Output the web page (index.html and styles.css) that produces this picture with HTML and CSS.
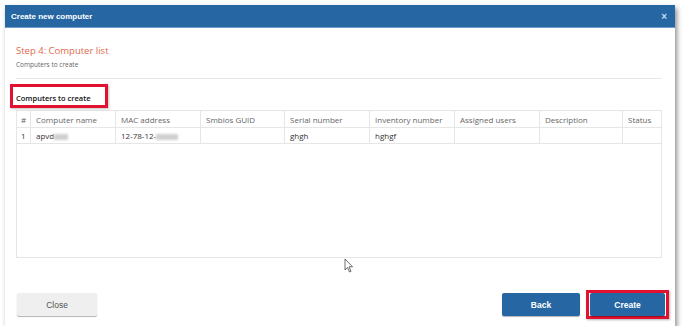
FILE: index.html
```html
<!DOCTYPE html>
<html lang="en">
<head>
    <meta charset="UTF-8">
    <title>Create new computer</title>
    <link rel="stylesheet" href="styles.css">
</head>
<body>
    <div class="dialog">
        <div class="dialog-header">
            <span class="dialog-title">Create new computer</span>
            <span class="close-x">&times;</span>
        </div>
        <div class="dialog-body">
            <div class="step-title">Step 4: Computer list</div>
            <div class="step-sub">Computers to create</div>
            <div class="divider"></div>
            <div class="section-label">Computers to create</div>
            <div class="table-wrap">
                <table class="grid">
                    <colgroup>
                        <col style="width:14px">
                        <col style="width:85px">
                        <col style="width:85px">
                        <col style="width:84px">
                        <col style="width:85px">
                        <col style="width:85px">
                        <col style="width:85px">
                        <col style="width:83px">
                        <col style="width:39px">
                    </colgroup>
                    <thead>
                        <tr>
                            <th>#</th>
                            <th>Computer name</th>
                            <th>MAC address</th>
                            <th>Smbios GUID</th>
                            <th>Serial number</th>
                            <th>Inventory number</th>
                            <th>Assigned users</th>
                            <th>Description</th>
                            <th>Status</th>
                        </tr>
                    </thead>
                    <tbody>
                        <tr>
                            <td>1</td>
                            <td>apvd<span class="blur w18"></span></td>
                            <td>12-78-12-<span class="blur w22"></span></td>
                            <td></td>
                            <td>ghgh</td>
                            <td>hghgf</td>
                            <td></td>
                            <td></td>
                            <td></td>
                        </tr>
                    </tbody>
                </table>
            </div>
        </div>
        <div class="dialog-footer">
            <button class="btn btn-light">Close</button>
            <div class="footer-right">
                <button class="btn btn-primary">Back</button>
                <div class="highlight">
                    <button class="btn btn-primary">Create</button>
                </div>
            </div>
        </div>
        <svg class="cursor" width="10" height="15" viewBox="0 0 10 15">
            <path d="M1 1 L1 12 L3.5 9.5 L5.5 14 L7 13.3 L5 8.8 L8.5 8.8 Z" fill="#fff" stroke="#444" stroke-width="0.8" stroke-linejoin="round"/>
        </svg>
    </div>
</body>
</html>
```

FILE: styles.css
```css
* {
    margin: 0;
    padding: 0;
    box-sizing: border-box;
}

body {
    background: #ffffff;
    font-family: 'Open Sans', 'Noto Sans', sans-serif;
    padding: 5px 0 0 5px;
}

.dialog {
    position: relative;
    width: 670px;
    height: 321px;
    background: #fff;
    display: flex;
    flex-direction: column;
    box-shadow: 2px 3px 5px rgba(0, 0, 0, 0.45);
}

.dialog-header {
    height: 23px;
    background: #2566a3;
    color: #fff;
    display: flex;
    align-items: center;
    justify-content: space-between;
    padding: 0 8px 0 6px;
    border-bottom: 1px solid #6f9acb;
}

.dialog-title {
    font-family: 'Liberation Sans', Arial, sans-serif;
    font-size: 8px;
    font-weight: bold;
}

.close-x {
    font-family: 'Liberation Sans', Arial, sans-serif;
    font-size: 10px;
    font-weight: bold;
    color: #c9dcf0;
}

.dialog-body {
    padding: 16px 13px 0 11px;
    flex: 1;
}

.step-title {
    color: #e2694c;
    font-size: 9.5px;
    line-height: 14px;
}

.step-sub {
    color: #666;
    font-size: 6.5px;
    line-height: 10px;
    margin-top: 2px;
}

.divider {
    height: 1px;
    background: #e8e8e8;
    margin-top: 8px;
}

.section-label {
    display: inline-block;
    margin: 5px 0 0 -6px;
    width: 98px;
    height: 24px;
    border: 3px solid #e1122f;
    padding: 1px 0 0 3px;
    font-size: 7.5px;
    font-weight: 600;
    color: #111;
    line-height: 20px;
    box-shadow: 1px 1px 2px rgba(0, 0, 0, 0.25);
}

.table-wrap {
    margin-top: 2px;
    height: 148px;
    border: 1px solid #e6e6e6;
}

.grid {
    width: 645px;
    border-collapse: collapse;
    table-layout: fixed;
    margin: -1px;
}

.grid th,
.grid td {
    border: 1px solid #e6e6e6;
    text-align: left;
    padding: 0 5px;
    font-size: 8px;
    white-space: nowrap;
    overflow: hidden;
}

.grid th {
    height: 17px;
    font-weight: normal;
    color: #666;
}

.grid td {
    height: 16px;
    color: #333;
}

.grid th:first-child,
.grid td:first-child {
    padding: 0 4px;
}

.blur {
    display: inline-block;
    height: 6px;
    background: #d0d0d0;
    filter: blur(1px);
    vertical-align: middle;
}

.w18 { width: 14px; }
.w22 { width: 22px; }

.dialog-footer {
    display: flex;
    align-items: center;
    justify-content: space-between;
    padding: 0 6px 3px 12px;
    height: 40px;
}

.footer-right {
    display: flex;
    align-items: center;
    gap: 6px;
}

.btn {
    border: none;
    height: 23px;
    font-family: 'Liberation Sans', Arial, sans-serif;
    font-size: 8.5px;
    cursor: pointer;
    border-radius: 2px;
}

.btn-light {
    width: 80px;
    background: #efefef;
    color: #555;
    box-shadow: 0 1px 1px rgba(0, 0, 0, 0.3);
}

.btn-primary {
    width: 78px;
    background: #2566a3;
    color: #fff;
    font-weight: bold;
    box-shadow: 0 1px 1px rgba(0, 0, 0, 0.3);
}

.highlight {
    border: 3px solid #e1122f;
    padding: 0 1px;
    box-shadow: 1px 1px 2px rgba(0, 0, 0, 0.3);
}

.highlight .btn {
    width: 75px;
    display: block;
}

.cursor {
    position: absolute;
    left: 339px;
    top: 253px;
}
```
